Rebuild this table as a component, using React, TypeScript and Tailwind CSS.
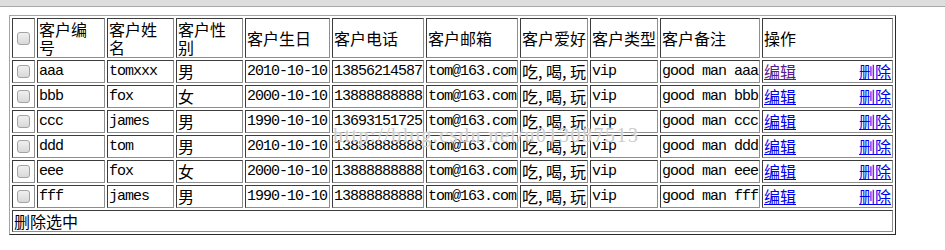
import React from 'react';

interface Customer {
  id: string;
  name: string;
  sex: string;
  birth: string;
  phone: string;
  visited?: boolean;
}

const customers: Customer[] = [
  { id: 'aaa', name: 'tomxxx', sex: '男', birth: '2010-10-10', phone: '13856214587', visited: true },
  { id: 'bbb', name: 'fox', sex: '女', birth: '2000-10-10', phone: '13888888888' },
  { id: 'ccc', name: 'james', sex: '男', birth: '1990-10-10', phone: '13693151725' },
  { id: 'ddd', name: 'tom', sex: '男', birth: '2010-10-10', phone: '13888888888' },
  { id: 'eee', name: 'fox', sex: '女', birth: '2000-10-10', phone: '13888888888' },
  { id: 'fff', name: 'james', sex: '男', birth: '1990-10-10', phone: '13888888888' },
];

// inset cell border like border="1"
const cell =
  'border border-solid border-t-[#3c3c3c] border-l-[#3c3c3c] border-r-[#8e8e8e] border-b-[#8e8e8e] p-px align-middle text-left font-normal overflow-hidden whitespace-nowrap';
const latin = "font-['Liberation_Mono',monospace] text-[15px] tracking-[-1px] leading-[19px]";
const cjk = "font-['Noto_Sans_CJK_SC',sans-serif] text-[16px] leading-[19px]";
const head = "font-['Noto_Sans_CJK_SC',sans-serif] text-[16px] leading-[18px] whitespace-normal";

const Checkbox = () => (
  <div className="mx-auto w-[13px] h-[13px] rounded-[3px] border border-solid border-[#a3a3a3] bg-linear-to-b from-[#f0f0f0] to-[#d9d9d9]" />
);

const Comma = () => <span className="inline-block w-[8px]">,</span>;

export default function App() {
  return (
    <div className="relative w-[945px] h-[250px] bg-white overflow-hidden text-black">
      <div className="h-[7px] bg-[#dedede] border-b border-solid border-[#a8a8a8]" />

      <table className="ml-[9px] mt-[8px] w-[887px] table-fixed border-separate border-spacing-[2px] border border-solid border-t-[#a3a3a3] border-l-[#a3a3a3] border-r-[#2a2a2a] border-b-[#2a2a2a]">
        <thead>
          <tr className="h-[40px]">
            <td className={`${cell} w-[23px]`}>
              <Checkbox />
            </td>
            <td className={`${cell} ${head} w-[68px]`}>客户编<br />号</td>
            <td className={`${cell} ${head} w-[67px]`}>客户姓<br />名</td>
            <td className={`${cell} ${head} w-[67px]`}>客户性<br />别</td>
            <td className={`${cell} ${head} w-[85px]`}>客户生日</td>
            <td className={`${cell} ${head} w-[92px]`}>客户电话</td>
            <td className={`${cell} ${head} w-[92px]`}>客户邮箱</td>
            <td className={`${cell} ${head} w-[68px]`}>客户爱好</td>
            <td className={`${cell} ${head} w-[68px]`}>客户类型</td>
            <td className={`${cell} ${head} w-[100px]`}>客户备注</td>
            <td className={`${cell} ${head} w-[131px]`}>操作</td>
          </tr>
        </thead>
        <tbody>
          {customers.map((c) => (
            <tr key={c.id} className="h-[23px]">
              <td className={cell}>
                <Checkbox />
              </td>
              <td className={`${cell} ${latin}`}>{c.id}</td>
              <td className={`${cell} ${latin}`}>{c.name}</td>
              <td className={`${cell} ${cjk}`}>{c.sex}</td>
              <td className={`${cell} ${latin}`}>{c.birth}</td>
              <td className={`${cell} ${latin}`}>{c.phone}</td>
              <td className={`${cell} ${latin}`}>tom@163.com</td>
              <td className={`${cell} ${cjk}`}>
                吃<Comma />喝<Comma />玩
              </td>
              <td className={`${cell} ${latin}`}>vip</td>
              <td className={`${cell} ${latin}`}>good man {c.id}</td>
              <td className={`${cell} ${cjk}`}>
                <div className="flex justify-between">
                  <a href="#" className={`underline ${c.visited ? 'text-[#551a8b]' : 'text-[#0000ee]'}`}>
                    编辑
                  </a>
                  <a href="#" className="underline text-[#0000ee]">
                    删除
                  </a>
                </div>
              </td>
            </tr>
          ))}
          <tr className="h-[22px]">
            <td colSpan={11} className={`${cell} ${head}`}>
              删除选中
            </td>
          </tr>
        </tbody>
      </table>

      {/* blog watermark over the table */}
      <span className="absolute left-[333px] top-[125px] font-['Liberation_Serif',serif] text-[20px] leading-[20px] tracking-[1.5px] text-[#cdcdcd] [text-shadow:0_0_2px_#ffffff] pointer-events-none select-none">
        http://blog.csdn.net/u013087513
      </span>
    </div>
  );
}
